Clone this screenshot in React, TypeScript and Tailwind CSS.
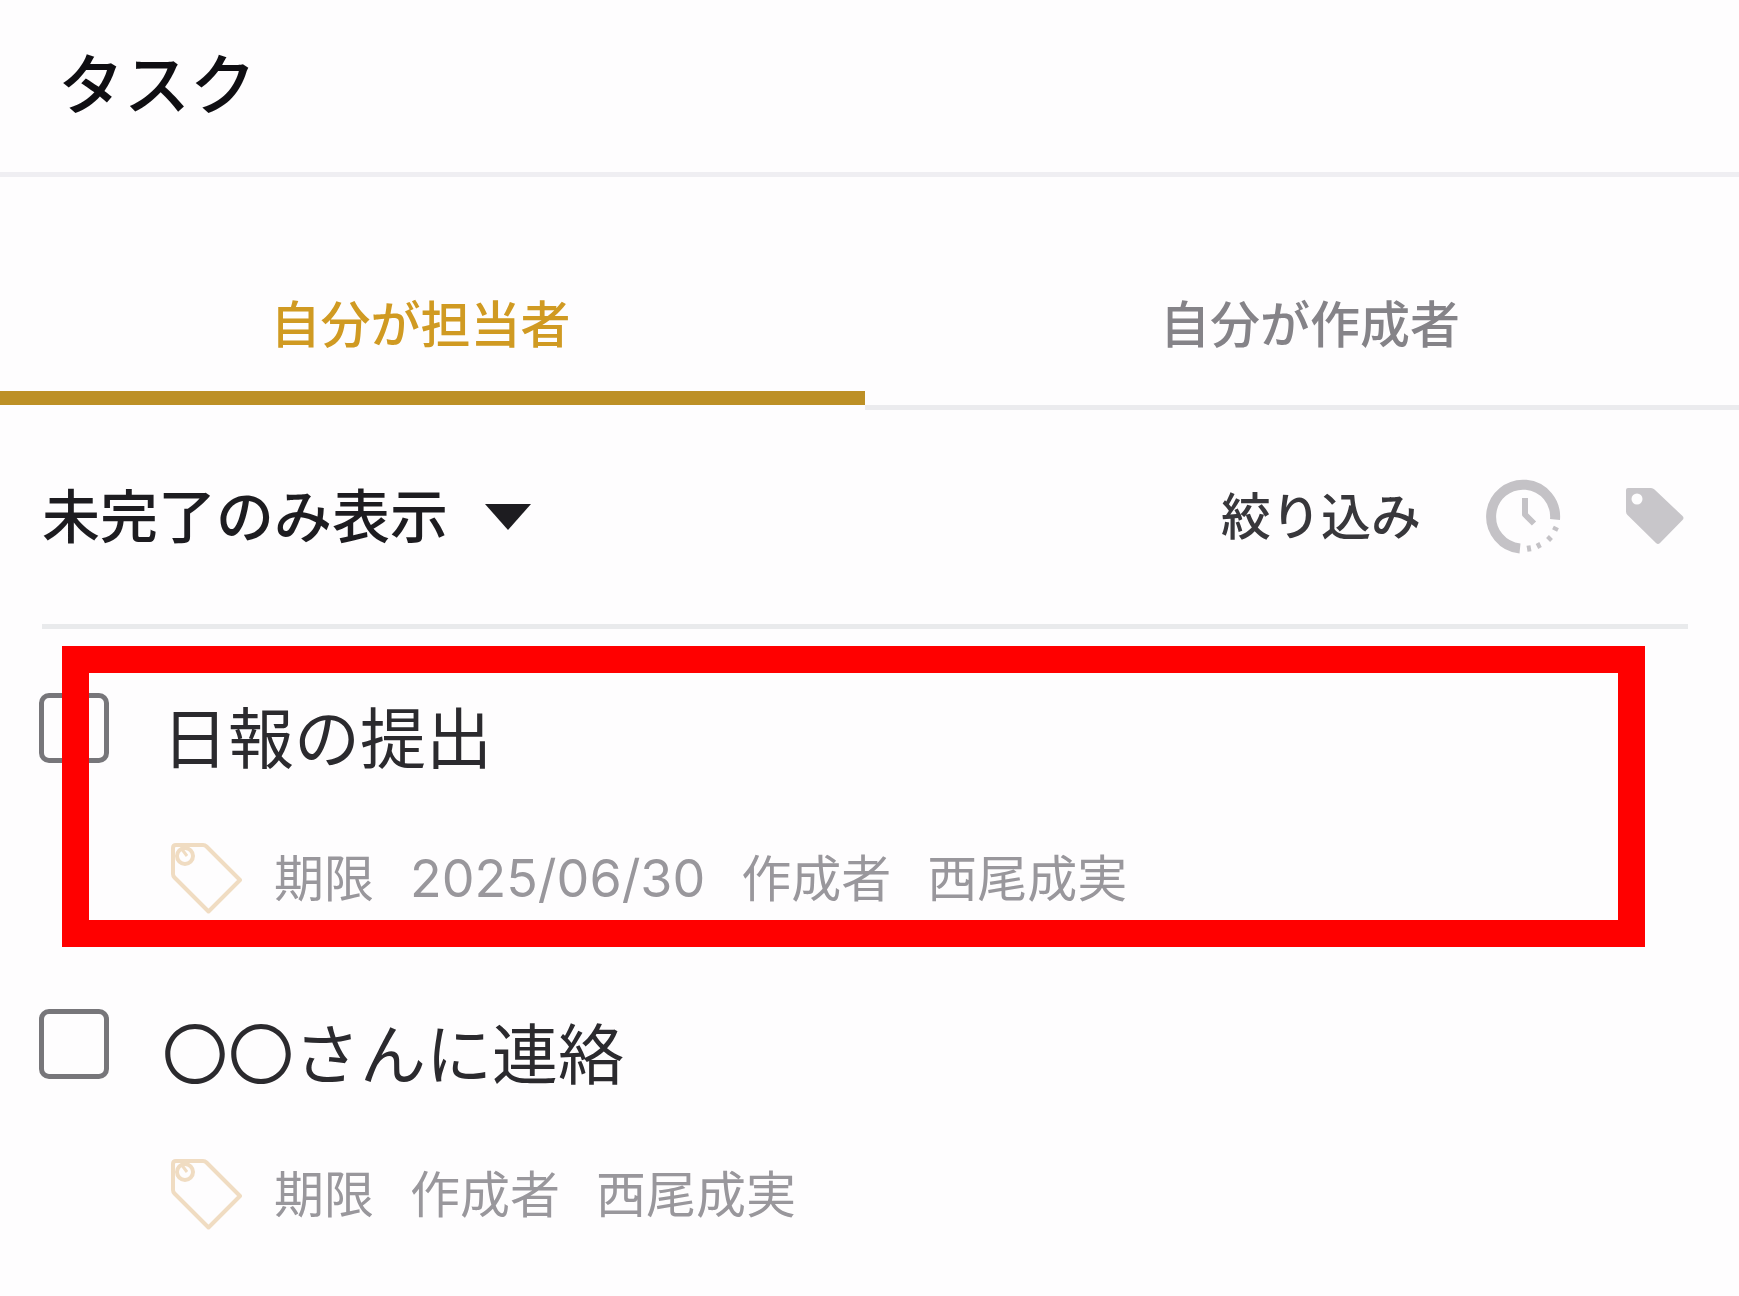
import { useState } from 'react';
import clsx from 'clsx';

interface Task {
  id: number;
  title: string;
  dueDate: string | null;
  author: string;
  highlighted: boolean;
}

const TASKS: Task[] = [
  { id: 1, title: '日報の提出', dueDate: '2025/06/30', author: '西尾成実', highlighted: true },
  { id: 2, title: '〇〇さんに連絡', dueDate: null, author: '西尾成実', highlighted: false },
];

function ClockIcon() {
  return (
    <svg viewBox="0 0 76 76" className="size-[76px]" fill="none" stroke="#c4c2c6" aria-hidden="true">
      <path d="M70 40.5A32 32 0 1 0 35 69.5" strokeWidth="10" />
      <path d="M40 19v16.5l9 9" strokeWidth="6" strokeLinejoin="round" />
      <path d="M68 48.5l5 2.5M62.5 57.5l4 4M52.5 64l2.5 5M43.5 66.5l1 6" strokeWidth="4" />
    </svg>
  );
}

function TagIcon() {
  return (
    <svg viewBox="0 0 60 60" className="size-[60px]" aria-hidden="true">
      <path
        d="M3 1h23q2 0 3.500 1.500L57.500 29q2 2 0 4L35 56q-2 2-4 0L2.500 28Q1 26.500 1 24.500V3q0-2 2-2z"
        fill="#c8c6ca"
      />
      <circle cx="12" cy="12" r="5.500" fill="#fefdfe" />
    </svg>
  );
}

function TagOutlineIcon() {
  return (
    <svg
      viewBox="0 0 72 72"
      className="size-[72px] shrink-0"
      fill="none"
      stroke="#f0dcc2"
      strokeWidth="4"
      strokeLinejoin="round"
      aria-hidden="true"
    >
      <path d="M6 2h27q2 0 3.500 1.500L70 37 38.500 68.500 4.500 34.500Q3 33 3 31V5q0-3 3-3z" />
      <circle cx="15" cy="13" r="8" />
      <path d="M11 5l6 8" strokeWidth="3" />
    </svg>
  );
}

function TaskItem({ task }: { task: Task }) {
  const inputId = `task-${task.id}`;

  return (
    <li className="relative flex gap-[53px] pt-16 pr-[51px] pb-[30px] pl-[39px]">
      <input
        id={inputId}
        type="checkbox"
        className="size-[70px] shrink-0 appearance-none rounded-[10px] border-5 border-[#77767a] bg-[#fefdfe] checked:bg-[#77767a]"
      />
      <div className="min-w-0">
        <label htmlFor={inputId} className="block text-[66px] leading-[92px] text-[#2b2a2e]">
          {task.title}
        </label>
        <div className="mt-[58px] flex items-center gap-9 text-[50px] leading-[72px] text-[#99979c]">
          <div className="flex items-center gap-8 pl-2">
            <TagOutlineIcon />
            <span>期限</span>
          </div>
          {task.dueDate && <time className="text-[52px]">{task.dueDate}</time>}
          <span>作成者</span>
          <span>{task.author}</span>
        </div>
      </div>
      {task.highlighted && (
        <div className="pointer-events-none absolute top-[17px] right-[94px] -bottom-0.5 left-[62px] border-[27px] border-[#ff0000]" />
      )}
    </li>
  );
}

export default function App() {
  const [tab, setTab] = useState<'assigned' | 'created'>('assigned');

  const tabClass = (active: boolean) =>
    clsx(
      'pt-[118px] text-[50px] leading-[60px] font-medium',
      active
        ? 'mb-[5px] border-b-[14px] border-[#bd9026] pb-9 text-[#d09a22]'
        : 'border-b-[5px] border-[#ebebee] pb-[50px] text-[#858388]',
    );

  return (
    <main className="min-h-screen bg-[#fefdfe] font-['Inter','Noto_Sans_CJK_JP',sans-serif]">
      <header className="border-b-[5px] border-[#efeef2] px-[58px] pt-[35px] pb-[37px]">
        <h1 className="text-[66px] leading-[100px] font-medium text-[#0f0e12]">タスク</h1>
      </header>

      <div role="tablist" className="grid grid-cols-[99fr_100fr]">
        <button
          type="button"
          role="tab"
          aria-selected={tab === 'assigned'}
          onClick={() => setTab('assigned')}
          className={clsx(tabClass(tab === 'assigned'), 'pr-6')}
        >
          自分が担当者
        </button>
        <button
          type="button"
          role="tab"
          aria-selected={tab === 'created'}
          onClick={() => setTab('created')}
          className={clsx(tabClass(tab === 'created'), 'pl-4')}
        >
          自分が作成者
        </button>
      </div>

      {/* Status filter on the left, narrowing options on the right */}
      <div className="mr-[51px] ml-[42px] flex items-center justify-between border-b-[5px] border-[#e9eaec] py-[67px]">
        <div className="flex items-center gap-9">
          <select
            aria-label="表示"
            className="appearance-none bg-transparent text-[58px] leading-[80px] font-medium text-[#1d1c20]"
          >
            <option>未完了のみ表示</option>
          </select>
          <svg viewBox="0 0 46 26" className="h-[26px] w-[46px]" aria-hidden="true">
            <path d="M0 0h46L23 26z" fill="#1d1c20" />
          </svg>
        </div>
        <div className="flex items-center gap-16 pr-[3px]">
          <span className="text-[50px] leading-[80px] font-medium text-[#38373b]">絞り込み</span>
          <button type="button" aria-label="期限">
            <ClockIcon />
          </button>
          <button type="button" aria-label="タグ">
            <TagIcon />
          </button>
        </div>
      </div>

      <ul>
        {TASKS.map((task) => (
          <TaskItem key={task.id} task={task} />
        ))}
      </ul>
    </main>
  );
}
